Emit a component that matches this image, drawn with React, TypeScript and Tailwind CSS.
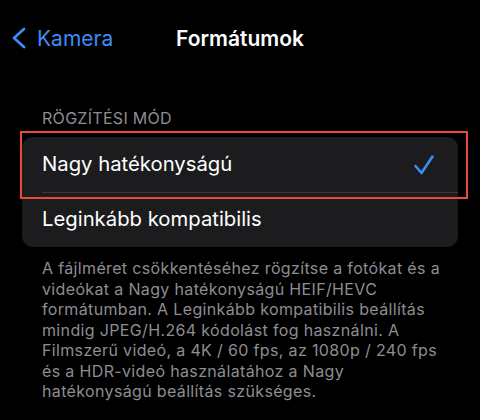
import { Fragment } from 'react';

const footerLines = [
  'A fájlméret csökkentéséhez rögzítse a fotókat és a',
  'videókat a Nagy hatékonyságú HEIF/HEVC',
  'formátumban. A Leginkább kompatibilis beállítás',
  'mindig JPEG/H.264 kódolást fog használni. A',
  'Filmszerű videó, a 4K / 60 fps, az 1080p / 240 fps',
  'és a HDR-videó használatához a Nagy',
  'hatékonyságú beállítás szükséges.',
];

function ChevronLeft() {
  return (
    <svg width="16" height="22" viewBox="0 0 16 22" fill="none" className="shrink-0">
      <path d="M13 2 L3 11 L13 20" stroke="#3a8cf6" strokeWidth="2.8" strokeLinecap="round" strokeLinejoin="round" />
    </svg>
  );
}

function Check() {
  return (
    <svg width="22" height="22" viewBox="0 0 22 22" fill="none">
      <path d="M2.5 12 L8.5 19 L19.5 2.5" stroke="#3a8cf6" strokeWidth="2.6" strokeLinecap="round" strokeLinejoin="round" />
    </svg>
  );
}

export default function App() {
  return (
    <div className="w-[480px] h-[420px] bg-black overflow-hidden font-['Inter',sans-serif] text-white">
      <nav className="h-[76px] grid grid-cols-[1fr_auto_1fr] items-center">
        <button className="flex items-center gap-[10px] pl-[11px] text-[#3a8cf6] text-[21px] leading-none">
          <ChevronLeft />
          <span>Kamera</span>
        </button>
        <h1 className="text-[21px] font-semibold leading-none">Formátumok</h1>
        <div />
      </nav>

      <div className="mt-[32px] px-[42px] text-[16px] leading-[20px] tracking-[0.3px] text-[#8d8d92] uppercase">
        Rögzítési mód
      </div>

      <div className="relative mt-[9px] mx-[22px] rounded-[11px] bg-[#1c1c1e]">
        <div className="h-[55px] flex items-center justify-between pl-[20px] pr-[23px]">
          <span className="text-[20.3px]">Nagy hatékonyságú</span>
          <Check />
        </div>
        <div className="ml-[20px] h-px bg-[#38383a]" />
        <div className="h-[55px] flex items-center pl-[20px] -mt-px">
          <span className="text-[20.3px]">Leginkább kompatibilis</span>
        </div>
        <div className="absolute left-[-2px] top-[-6px] w-[448px] h-[68px] border-2 border-[#e9483a] pointer-events-none" />
      </div>

      <p className="mt-[11px] pl-[42px] whitespace-nowrap text-[16px] leading-[20.5px] tracking-[0.35px] text-[#8d8d92]">
        {footerLines.map((line, i) => (
          <Fragment key={i}>
            {line}
            {i < footerLines.length - 1 && <br />}
          </Fragment>
        ))}
      </p>
    </div>
  );
}
